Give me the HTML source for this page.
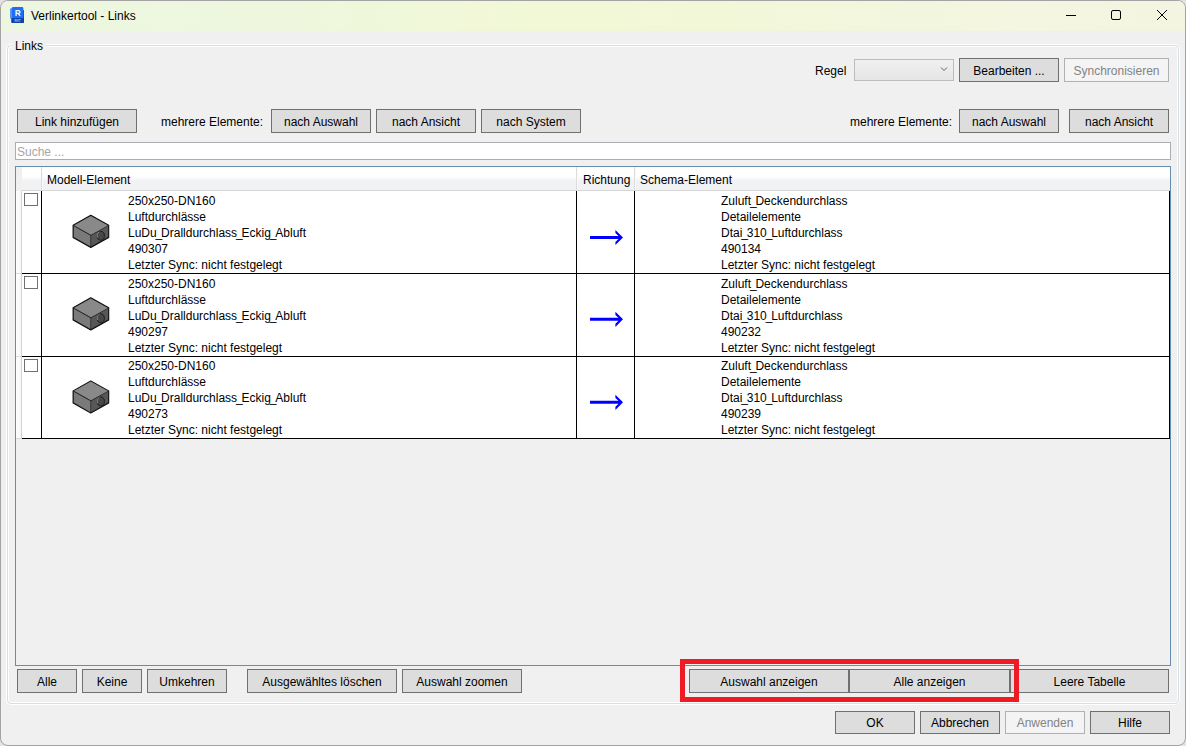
<!DOCTYPE html>
<html><head><meta charset="utf-8">
<style>
*{box-sizing:border-box;margin:0;padding:0}
html,body{width:1186px;height:746px;overflow:hidden;background:#e2e2e2}
body{font-family:"Liberation Sans",sans-serif;font-size:12px;color:#000;position:relative}
.win{position:absolute;left:0;top:0;width:1186px;height:746px;background:#f0f0f0;border:1px solid #a3a3a3;border-radius:8px;overflow:hidden}
.title{position:absolute;left:0;top:0;width:1184px;height:30px;background:linear-gradient(90deg,#edf6e1 0%,#eef7dd 25%,#f2f8d6 45%,#f2f7d8 60%,#f3f6df 78%,#f3f5e2 100%)}
.a{position:absolute;white-space:pre;line-height:16px}
.btn{position:absolute;height:24px;background:#dddddd;border:1px solid #707070;text-align:center;line-height:16px;padding-top:4px;white-space:pre}
.btn.dis{background:#f4f4f4;border-color:#adb2b5;color:#838383}
.gb{position:absolute;left:7px;top:45px;width:1172px;height:659px;border:1px solid #d5dfe5;border-radius:4px;box-shadow:inset 0 0 0 1px #fff,0 0 0 1px #fff}
.r{position:absolute}
.cb{position:absolute;width:14px;height:13px;border:1px solid #707070;background:#fff}
</style></head>
<body>
<div class="win"><div class="title"></div></div>
<svg style="position:absolute;left:6px;top:4px" width="22" height="22" viewBox="0 0 22 22">
  <rect x="4" y="4.2" width="3" height="10.6" rx="1" fill="#5b94ec"/>
  <rect x="16" y="6" width="2" height="12.8" rx="0.6" fill="#0f4cb8"/>
  <rect x="5.9" y="3" width="11.4" height="11.2" rx="1.2" fill="#1f6ff5"/>
  <rect x="5.2" y="14" width="12.8" height="5" rx="0.9" fill="#0b43ad"/>
  <path d="M10.1,12 V6.5 H12.4 A1.6,1.45 0 0 1 12.4,9.4 H10.1 M12.2,9.4 L14.1,12" fill="none" stroke="#fff" stroke-width="1.25"/>
  <text x="11.6" y="17.6" font-family="Liberation Sans" font-weight="bold" font-size="3.2" fill="#a9c3ef" text-anchor="middle">RVT</text>
</svg>
<div class="a" style="left:31px;top:8px">Verlinkertool - Links</div>
<svg style="position:absolute;left:1060px;top:4px" width="116" height="24">
  <line x1="6" y1="11.5" x2="16" y2="11.5" stroke="#000" stroke-width="1"/>
  <rect x="51.5" y="6.5" width="9" height="9" rx="1.5" fill="none" stroke="#000" stroke-width="1"/>
  <line x1="97" y1="6" x2="107" y2="16" stroke="#000" stroke-width="1"/>
  <line x1="107" y1="6" x2="97" y2="16" stroke="#000" stroke-width="1"/>
</svg>
<div class="gb"></div>
<div class="a" style="left:12px;top:38px;padding:0 3px;background:#f0f0f0">Links</div>
<div class="a" style="left:815px;top:63px;">Regel</div>
<div class="r" style="left:854px;top:59px;width:100px;height:22px;border:1px solid #bcbcbc;background:linear-gradient(#f0f0f0,#e5e5e5)"></div>
<svg style="position:absolute;left:940px;top:66px" width="8" height="6"><polyline points="1,1.5 4,4.5 7,1.5" fill="none" stroke="#606060" stroke-width="1"/></svg>
<div class="btn" style="left:959px;top:58px;width:100px;height:24px;padding-top:4px">Bearbeiten ...</div>
<div class="btn dis" style="left:1064px;top:58px;width:105px;height:24px;padding-top:4px">Synchronisieren</div>
<div class="btn" style="left:17px;top:109px;width:120px;height:24px;padding-top:4px">Link hinzufügen</div>
<div class="a" style="left:161px;top:114px;">mehrere Elemente:</div>
<div class="btn" style="left:271px;top:109px;width:100px;height:24px;padding-top:4px">nach Auswahl</div>
<div class="btn" style="left:376px;top:109px;width:100px;height:24px;padding-top:4px">nach Ansicht</div>
<div class="btn" style="left:481px;top:109px;width:100px;height:24px;padding-top:4px">nach System</div>
<div class="a" style="left:850px;top:114px;">mehrere Elemente:</div>
<div class="btn" style="left:959px;top:109px;width:100px;height:24px;padding-top:4px">nach Auswahl</div>
<div class="btn" style="left:1069px;top:109px;width:100px;height:24px;padding-top:4px">nach Ansicht</div>
<div class="r" style="left:15px;top:142px;width:1156px;height:18px;background:#fff;border:1px solid #abadb3"></div>
<div class="a" style="left:17px;top:144px;color:#a6a6a6">Suche ...</div>
<div class="r" style="left:15px;top:166px;width:1156px;height:500px;border:1px solid #688caf;background:#f0f0f0"></div>
<div class="r" style="left:16px;top:167px;width:6px;height:24px;background:#f0f0f0"></div>
<div class="r" style="left:22px;top:167px;width:1148px;height:23px;background:linear-gradient(#ffffff 0%,#ffffff 40%,#f1f2f4 60%,#f1f2f4 100%)"></div>
<div class="r" style="left:22px;top:190px;width:1148px;height:1px;background:#d5d5d5"></div>
<div class="r" style="left:41px;top:167px;width:1px;height:23px;background:#dcdcdc"></div>
<div class="r" style="left:42px;top:167px;width:1px;height:23px;background:#fafafa"></div>
<div class="r" style="left:576px;top:167px;width:1px;height:23px;background:#dcdcdc"></div>
<div class="r" style="left:577px;top:167px;width:1px;height:23px;background:#fafafa"></div>
<div class="r" style="left:634px;top:167px;width:1px;height:23px;background:#dcdcdc"></div>
<div class="r" style="left:635px;top:167px;width:1px;height:23px;background:#fafafa"></div>
<div class="a" style="left:47px;top:172px;">Modell-Element</div>
<div class="a" style="left:583px;top:172px;">Richtung</div>
<div class="a" style="left:640px;top:172px;">Schema-Element</div>
<div class="r" style="left:16px;top:191px;width:6px;height:248px;background:linear-gradient(90deg,#ffffff,#f4f6f9)"></div>
<div class="r" style="left:21px;top:191px;width:1px;height:248px;background:#d5d5d5"></div>
<div class="r" style="left:22px;top:191px;width:1147px;height:248px;background:#fff"></div>
<div class="r" style="left:22px;top:273px;width:1148px;height:1px;background:#000"></div>
<div class="r" style="left:16px;top:273px;width:5px;height:1px;background:#dcdcdc"></div>
<div class="r" style="left:22px;top:356px;width:1148px;height:1px;background:#000"></div>
<div class="r" style="left:16px;top:356px;width:5px;height:1px;background:#dcdcdc"></div>
<div class="r" style="left:22px;top:438px;width:1148px;height:1px;background:#000"></div>
<div class="r" style="left:16px;top:438px;width:5px;height:1px;background:#dcdcdc"></div>
<div class="r" style="left:41px;top:191px;width:1px;height:248px;background:#000"></div>
<div class="r" style="left:576px;top:191px;width:1px;height:248px;background:#000"></div>
<div class="r" style="left:634px;top:191px;width:1px;height:248px;background:#000"></div>
<div class="r" style="left:1169px;top:191px;width:1px;height:248px;background:#000"></div>
<div class="cb" style="left:24px;top:193px"></div>
<div class="a" style="left:128px;top:193px;">250x250-DN160</div>
<div class="a" style="left:721px;top:193px;">Zuluft<span style="margin:0 -1.15px">_</span>Deckendurchlass</div>
<div class="a" style="left:128px;top:209px;">Luftdurchlässe</div>
<div class="a" style="left:721px;top:209px;">Detailelemente</div>
<div class="a" style="left:128px;top:225px;">LuDu<span style="margin:0 -1.15px">_</span>Dralldurchlass<span style="margin:0 -1.15px">_</span>Eckig<span style="margin:0 -1.15px">_</span>Abluft</div>
<div class="a" style="left:721px;top:225px;">Dtai<span style="margin:0 -1.15px">_</span>310<span style="margin:0 -1.15px">_</span>Luftdurchlass</div>
<div class="a" style="left:128px;top:241px;">490307</div>
<div class="a" style="left:721px;top:241px;">490134</div>
<div class="a" style="left:128px;top:257px;">Letzter Sync: nicht festgelegt</div>
<div class="a" style="left:721px;top:257px;">Letzter Sync: nicht festgelegt</div>
<svg class="r" style="left:66px;top:210px" width="50" height="44" viewBox="0 0.0 50 44">
<polygon points="24.8,5.3 42.7,15.3 42.7,27.4 24.8,37.4 7.1,27.4 7.1,15.3" fill="#111" stroke="#111" stroke-width="1.1" stroke-linejoin="round"/>
<polygon points="24.8,5.9 42,15.5 24.8,25 7.8,15.5" fill="#898989"/>
<polygon points="7.8,15.9 24.5,25.4 24.5,36.6 7.8,27" fill="#7a7a7a"/>
<polygon points="25.1,25.4 42,15.9 42,27 25.1,36.6" fill="#575757"/>
<line x1="7.8" y1="15.7" x2="24.8" y2="25.2" stroke="#2a2a2a" stroke-width="0.8"/>
<ellipse cx="34.8" cy="25.8" rx="3.6" ry="4.4" fill="#474747" stroke="#1a1a1a" stroke-width="0.9"/>
<path d="M31.6,27.5 A3.6,4.4 0 0 1 33.5,21.8" fill="none" stroke="#b0b0b0" stroke-width="0.7"/>
</svg>
<svg class="r" style="left:585px;top:227px" width="44" height="20" viewBox="585 227 44 20">
<polygon points="590,236.0 618.5,236.0 615.4,233.1 615.4,229.9 623,237.5 615.4,245.1 615.4,241.9 618.5,239.0 590,239.0" fill="#0000ff"/>
</svg>
<div class="cb" style="left:24px;top:276px"></div>
<div class="a" style="left:128px;top:276px;">250x250-DN160</div>
<div class="a" style="left:721px;top:276px;">Zuluft<span style="margin:0 -1.15px">_</span>Deckendurchlass</div>
<div class="a" style="left:128px;top:292px;">Luftdurchlässe</div>
<div class="a" style="left:721px;top:292px;">Detailelemente</div>
<div class="a" style="left:128px;top:308px;">LuDu<span style="margin:0 -1.15px">_</span>Dralldurchlass<span style="margin:0 -1.15px">_</span>Eckig<span style="margin:0 -1.15px">_</span>Abluft</div>
<div class="a" style="left:721px;top:308px;">Dtai<span style="margin:0 -1.15px">_</span>310<span style="margin:0 -1.15px">_</span>Luftdurchlass</div>
<div class="a" style="left:128px;top:324px;">490297</div>
<div class="a" style="left:721px;top:324px;">490232</div>
<div class="a" style="left:128px;top:340px;">Letzter Sync: nicht festgelegt</div>
<div class="a" style="left:721px;top:340px;">Letzter Sync: nicht festgelegt</div>
<svg class="r" style="left:66px;top:292px" width="50" height="44" viewBox="0 -0.5 50 44">
<polygon points="24.8,5.3 42.7,15.3 42.7,27.4 24.8,37.4 7.1,27.4 7.1,15.3" fill="#111" stroke="#111" stroke-width="1.1" stroke-linejoin="round"/>
<polygon points="24.8,5.9 42,15.5 24.8,25 7.8,15.5" fill="#898989"/>
<polygon points="7.8,15.9 24.5,25.4 24.5,36.6 7.8,27" fill="#7a7a7a"/>
<polygon points="25.1,25.4 42,15.9 42,27 25.1,36.6" fill="#575757"/>
<line x1="7.8" y1="15.7" x2="24.8" y2="25.2" stroke="#2a2a2a" stroke-width="0.8"/>
<ellipse cx="34.8" cy="25.8" rx="3.6" ry="4.4" fill="#474747" stroke="#1a1a1a" stroke-width="0.9"/>
<path d="M31.6,27.5 A3.6,4.4 0 0 1 33.5,21.8" fill="none" stroke="#b0b0b0" stroke-width="0.7"/>
</svg>
<svg class="r" style="left:585px;top:309px" width="44" height="20" viewBox="585 309 44 20">
<polygon points="590,317.8 618.5,317.8 615.4,314.90000000000003 615.4,311.7 623,319.3 615.4,326.90000000000003 615.4,323.7 618.5,320.8 590,320.8" fill="#0000ff"/>
</svg>
<div class="cb" style="left:24px;top:359px"></div>
<div class="a" style="left:128px;top:358px;">250x250-DN160</div>
<div class="a" style="left:721px;top:358px;">Zuluft<span style="margin:0 -1.15px">_</span>Deckendurchlass</div>
<div class="a" style="left:128px;top:374px;">Luftdurchlässe</div>
<div class="a" style="left:721px;top:374px;">Detailelemente</div>
<div class="a" style="left:128px;top:390px;">LuDu<span style="margin:0 -1.15px">_</span>Dralldurchlass<span style="margin:0 -1.15px">_</span>Eckig<span style="margin:0 -1.15px">_</span>Abluft</div>
<div class="a" style="left:721px;top:390px;">Dtai<span style="margin:0 -1.15px">_</span>310<span style="margin:0 -1.15px">_</span>Luftdurchlass</div>
<div class="a" style="left:128px;top:406px;">490273</div>
<div class="a" style="left:721px;top:406px;">490239</div>
<div class="a" style="left:128px;top:422px;">Letzter Sync: nicht festgelegt</div>
<div class="a" style="left:721px;top:422px;">Letzter Sync: nicht festgelegt</div>
<svg class="r" style="left:66px;top:375px" width="50" height="44" viewBox="0 -0.5999999999999659 50 44">
<polygon points="24.8,5.3 42.7,15.3 42.7,27.4 24.8,37.4 7.1,27.4 7.1,15.3" fill="#111" stroke="#111" stroke-width="1.1" stroke-linejoin="round"/>
<polygon points="24.8,5.9 42,15.5 24.8,25 7.8,15.5" fill="#898989"/>
<polygon points="7.8,15.9 24.5,25.4 24.5,36.6 7.8,27" fill="#7a7a7a"/>
<polygon points="25.1,25.4 42,15.9 42,27 25.1,36.6" fill="#575757"/>
<line x1="7.8" y1="15.7" x2="24.8" y2="25.2" stroke="#2a2a2a" stroke-width="0.8"/>
<ellipse cx="34.8" cy="25.8" rx="3.6" ry="4.4" fill="#474747" stroke="#1a1a1a" stroke-width="0.9"/>
<path d="M31.6,27.5 A3.6,4.4 0 0 1 33.5,21.8" fill="none" stroke="#b0b0b0" stroke-width="0.7"/>
</svg>
<svg class="r" style="left:585px;top:392px" width="44" height="20" viewBox="585 392 44 20">
<polygon points="590,400.8 618.5,400.8 615.4,397.90000000000003 615.4,394.7 623,402.3 615.4,409.90000000000003 615.4,406.7 618.5,403.8 590,403.8" fill="#0000ff"/>
</svg>
<div class="btn" style="left:17px;top:669px;width:60px;height:24px;padding-top:4px">Alle</div>
<div class="btn" style="left:82px;top:669px;width:60px;height:24px;padding-top:4px">Keine</div>
<div class="btn" style="left:147px;top:669px;width:80px;height:24px;padding-top:4px">Umkehren</div>
<div class="btn" style="left:247px;top:669px;width:150px;height:24px;padding-top:4px">Ausgewähltes löschen</div>
<div class="btn" style="left:402px;top:669px;width:120px;height:24px;padding-top:4px">Auswahl zoomen</div>
<div class="btn" style="left:689px;top:669px;width:160px;height:24px;padding-top:4px">Auswahl anzeigen</div>
<div class="btn" style="left:849px;top:669px;width:161px;height:24px;padding-top:4px">Alle anzeigen</div>
<div class="btn" style="left:1010px;top:669px;width:159px;height:24px;padding-top:4px">Leere Tabelle</div>
<div class="r" style="left:680px;top:659px;width:339px;height:43px;border:5px solid #ed1c24"></div>
<div class="btn" style="left:835px;top:711px;width:80px;height:23px;padding-top:3px">OK</div>
<div class="btn" style="left:920px;top:711px;width:80px;height:23px;padding-top:3px">Abbrechen</div>
<div class="btn dis" style="left:1005px;top:711px;width:80px;height:23px;padding-top:3px">Anwenden</div>
<div class="btn" style="left:1090px;top:711px;width:80px;height:23px;padding-top:3px">Hilfe</div>
</body></html>
